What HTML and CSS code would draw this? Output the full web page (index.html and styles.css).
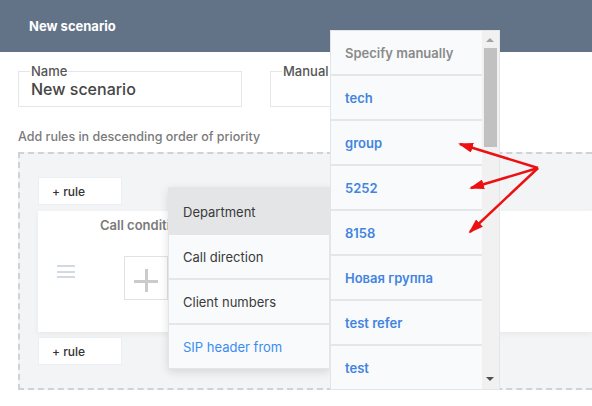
FILE: index.html
```html
<!DOCTYPE html>
<html lang="en">
    <head>
        <meta charset="UTF-8">
        <title>New scenario</title>
        <link rel="stylesheet" href="styles.css">
    </head>
    <body>
        <header class="topbar">
            <h1 class="topbar-title">New scenario</h1>
        </header>
        <main class="content">
            <div class="fields">
                <div class="field field-name">
                    <span class="field-label">Name</span>
                    <div class="field-value">New scenario</div>
                </div>
                <div class="field field-manual">
                    <span class="field-label">Manual</span>
                </div>
            </div>
            <p class="hint">Add rules in descending order of priority</p>
            <div class="rules">
                <button class="add-rule">+ rule</button>
                <div class="rule-card">
                    <div class="drag-handle"><span></span><span></span><span></span></div>
                    <div class="rule-body">
                        <div class="rule-title">Call conditions</div>
                        <button class="add-condition"><span class="plus"></span></button>
                    </div>
                </div>
                <button class="add-rule">+ rule</button>
            </div>
        </main>

        <ul class="menu menu-conditions">
            <li class="menu-item active">Department</li>
            <li class="menu-item">Call direction</li>
            <li class="menu-item">Client numbers</li>
            <li class="menu-item link">SIP header from</li>
        </ul>

        <div class="menu menu-values">
            <ul class="values-list">
                <li class="value-item muted">Specify manually</li>
                <li class="value-item">tech</li>
                <li class="value-item">group</li>
                <li class="value-item">5252</li>
                <li class="value-item">8158</li>
                <li class="value-item">Новая группа</li>
                <li class="value-item">test refer</li>
                <li class="value-item">test</li>
            </ul>
            <div class="scrollbar">
                <span class="scroll-up"></span>
                <span class="scroll-thumb"></span>
                <span class="scroll-down"></span>
            </div>
        </div>

        <svg class="arrows" width="592" height="406" viewBox="0 0 592 406">
            <defs>
                <marker id="head" markerUnits="userSpaceOnUse" markerWidth="15" markerHeight="10" refX="13" refY="5" orient="auto">
                    <path d="M0,0 L15,5 L0,10 Z" fill="#ec1010"/>
                </marker>
            </defs>
            <line x1="538" y1="168" x2="460" y2="144" stroke="#ec1010" stroke-width="2.5" marker-end="url(#head)"/>
            <line x1="538" y1="168" x2="471" y2="188" stroke="#ec1010" stroke-width="2.5" marker-end="url(#head)"/>
            <line x1="538" y1="168" x2="470" y2="232" stroke="#ec1010" stroke-width="2.5" marker-end="url(#head)"/>
        </svg>
    </body>
</html>
```

FILE: styles.css
```css
*{
    padding: 0;
    margin: 0;
    box-sizing: border-box;
}
body {
    font-family: Inter, "Noto Sans", sans-serif;
    background: #fff;
    width: 592px;
    height: 406px;
    overflow: hidden;
    position: relative;
}
.topbar {
    height: 52px;
    background: #627388;
    display: flex;
    align-items: center;
    padding-left: 29px;
}
.topbar-title {
    color: #fff;
    font-size: 13px;
    font-weight: 700;
}
.content {
    padding: 19px 0 0 18px;
}
.fields {
    display: flex;
    gap: 28px;
}
.field {
    position: relative;
    width: 224px;
    height: 36px;
    border: 1px solid #e5e6e8;
    padding: 8px 12px 0;
}
.field-label {
    position: absolute;
    top: -7px;
    left: 11px;
    padding: 0 1px;
    background: #fff;
    font-size: 13px;
    line-height: 12px;
    font-weight: 500;
    color: #555;
}
.field-value {
    font-size: 16px;
    line-height: 18px;
    font-weight: 500;
    color: #454545;
}
.hint {
    margin: 22px 0 7px;
    font-size: 12.5px;
    line-height: 16px;
    font-weight: 500;
    color: #7a7a7a;
}
.rules {
    border: 2px dashed #cfd2d8;
    border-right: none;
    background: #f3f4f6;
    padding: 23px 0 23px 18px;
}
.add-rule {
    display: block;
    width: 84px;
    height: 28px;
    background: #fff;
    border: 1px solid #eceef1;
    text-align: left;
    padding-left: 13px;
    font-family: inherit;
    font-size: 12px;
    font-weight: 500;
    color: #333;
}
.rule-card {
    display: flex;
    height: 121px;
    margin: 6px 0 5px;
    background: #fff;
    box-shadow: 0 2px 6px rgba(0, 0, 0, 0.05);
}
.drag-handle {
    width: 62px;
    padding-left: 19px;
    display: flex;
    flex-direction: column;
    justify-content: center;
    gap: 3.5px;
}
.drag-handle span {
    display: block;
    width: 18px;
    height: 2px;
    background: #d3d9e0;
}
.rule-body {
    padding: 6px 0 0 0;
}
.rule-title {
    font-size: 13px;
    line-height: 16px;
    font-weight: 600;
    color: #7b7b7b;
}
.add-condition {
    display: block;
    position: relative;
    width: 44px;
    height: 44px;
    margin: 23px 0 0 24px;
    background: #fff;
    border: 1px solid #e2e2e2;
}
.plus::before,
.plus::after {
    content: "";
    position: absolute;
    background: #cbcbcb;
}
.plus::before {
    left: 9px;
    top: 23px;
    width: 24px;
    height: 3px;
}
.plus::after {
    left: 20px;
    top: 12px;
    width: 3px;
    height: 23px;
}
.menu {
    position: absolute;
    list-style: none;
    background: #f9fafc;
    border: 1px solid #e3e5e9;
}
.menu-conditions {
    left: 168px;
    top: 187px;
    width: 162px;
    box-shadow: 0 3px 9px rgba(0, 0, 0, 0.12);
}
.menu-item {
    height: 45px;
    border-bottom: 2px solid #e5e6ea;
    display: flex;
    align-items: center;
    padding-left: 14px;
    font-size: 13px;
    color: #3a3a3a;
}
.menu-item.active {
    height: 47px;
    border-bottom: none;
    background: #e4e5e7;
}
.menu-item:last-child {
    height: 43px;
    border-bottom: none;
}
.menu-item.link {
    color: #3b8cf2;
}
.menu-values {
    left: 330px;
    top: 30px;
    width: 170px;
    height: 360px;
    overflow: hidden;
    display: flex;
}
.values-list {
    list-style: none;
    width: 152px;
}
.value-item {
    height: 45px;
    border-bottom: 2px solid #e5e6ea;
    display: flex;
    align-items: center;
    padding-left: 14px;
    font-size: 13px;
    font-weight: 600;
    color: #4284df;
}
.value-item.muted {
    color: #8a8a8a;
}
.scrollbar {
    position: relative;
    width: 17px;
    background: #f1f1f1;
}
.scroll-up,
.scroll-down {
    position: absolute;
    left: 4px;
    width: 0;
    height: 0;
    border-left: 4px solid transparent;
    border-right: 4px solid transparent;
}
.scroll-up {
    top: 7px;
    border-bottom: 4px solid #a3a3a3;
}
.scroll-down {
    bottom: 8px;
    border-top: 4px solid #505050;
}
.scroll-thumb {
    position: absolute;
    left: 2px;
    top: 17px;
    width: 13px;
    height: 99px;
    background: #c1c1c1;
}
.arrows {
    position: absolute;
    left: 0;
    top: 0;
    pointer-events: none;
}
```
